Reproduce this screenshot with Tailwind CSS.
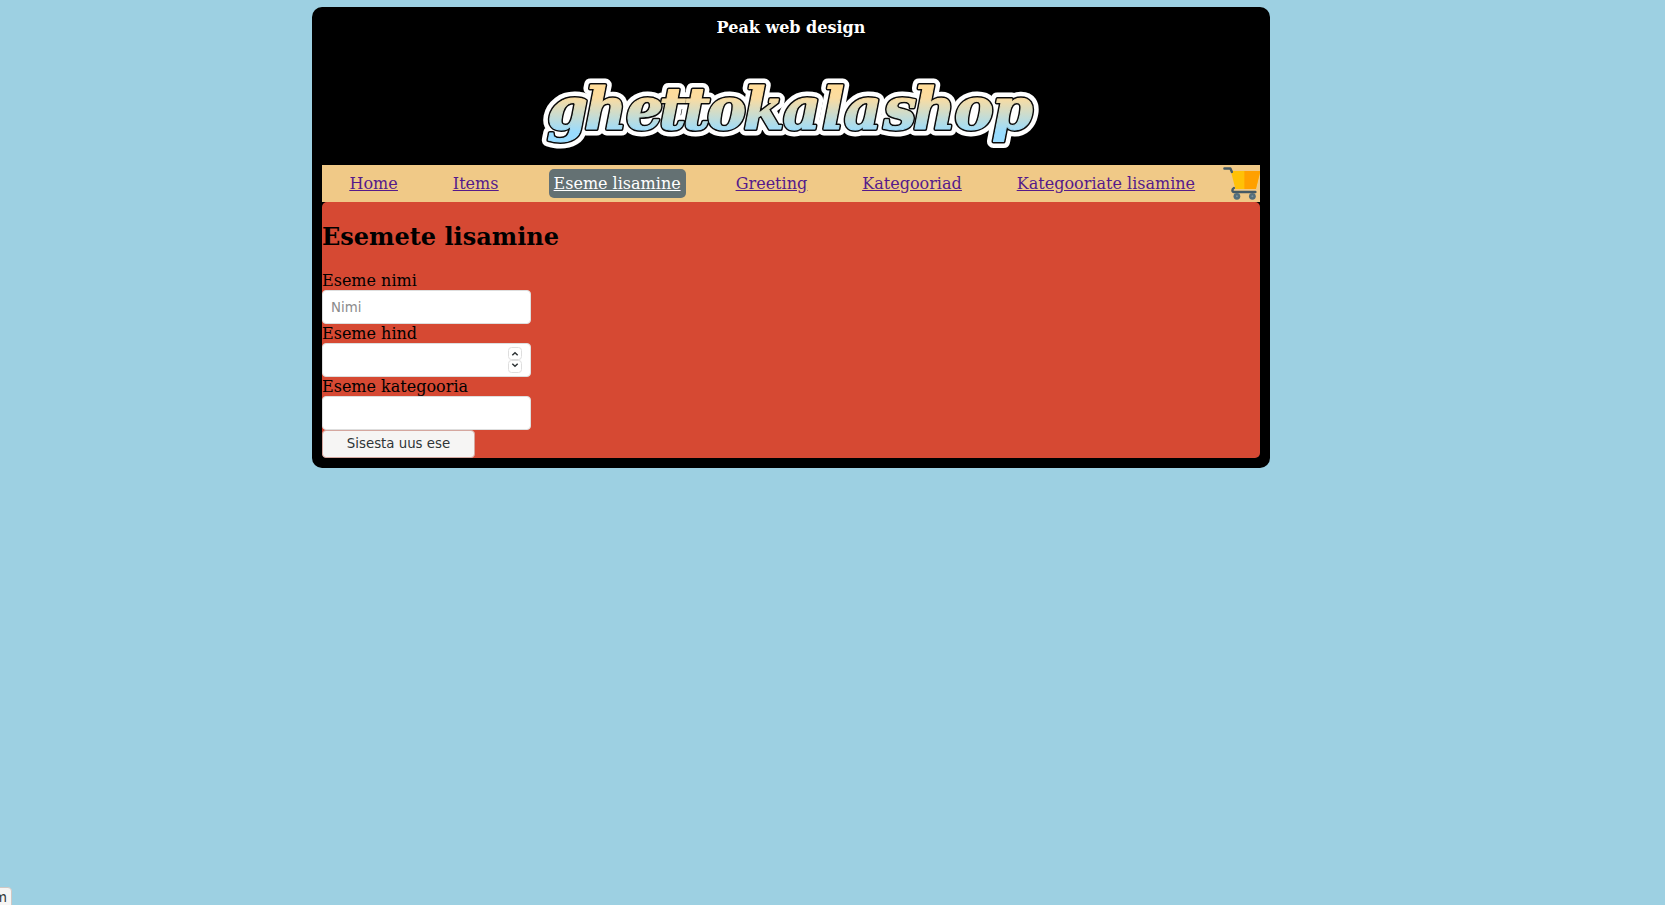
<!DOCTYPE html>
<html lang="et">
<head>
<meta charset="utf-8">
<title>Ghettokalashop</title>
<script src="https://cdn.jsdelivr.net/npm/@tailwindcss/browser@4"></script>
</head>
<body class="h-screen overflow-hidden bg-[#9dd0e2] pt-[7px] font-['DejaVu_Serif',serif] text-base leading-[19px] text-black">
<div class="ml-[312px] w-[958px] rounded-[10px] bg-black p-[10px]">
  <header class="h-[148px] pt-px">
    <p class="text-center font-bold text-white">Peak web design</p>
    <svg class="mt-[28px] ml-[208px] h-[90px] w-[522px]" viewBox="530 65 522 90">
      <defs>
        <linearGradient id="sky" gradientUnits="userSpaceOnUse" x1="0" y1="88" x2="0" y2="137">
          <stop offset="0" stop-color="#ffdc99"/><stop offset=".2" stop-color="#fbdca0"/><stop offset=".9" stop-color="#99dcff"/>
        </linearGradient>
      </defs>
      <g font-family="DejaVu Serif, serif" font-weight="bold" font-style="italic" font-size="58.5" stroke-linejoin="round">
        <text y="129" x="547 584.5 626 659 683 707 743.5 783 822 844 883.5 913 954.5 992" fill="#fff" stroke="#fff" stroke-width="13">ghettokalashop</text>
        <text y="129" x="547 584.5 626 659 683 707 743.5 783 822 844 883.5 913 954.5 992" fill="#0b0b0b" stroke="#0b0b0b" stroke-width="4" aria-hidden="true">ghettokalashop</text>
        <text y="129" x="547 584.5 626 659 683 707 743.5 783 822 844 883.5 913 954.5 992" fill="url(#sky)" stroke="url(#sky)" stroke-width="1" aria-hidden="true">ghettokalashop</text>
      </g>
    </svg>
  </header>
  <nav class="flex h-[37px] items-center bg-[#f0c987]">
    <div class="flex flex-1 items-center justify-around text-[#551a8b] underline">
      <a>Home</a>
      <a>Items</a>
      <a class="-mx-[5px] rounded-[5px] bg-[#647173] p-[5px] text-white">Eseme lisamine</a>
      <a>Greeting</a>
      <a>Kategooriad</a>
      <a>Kategooriate lisamine</a>
    </div>
    <svg class="h-[37px] w-[37.4px]" viewBox="0.6 0 37.4 37">
      <path d="M8.500 6H38l-4.500 18H13z" fill="#ffc107"/><path d="M22 6h16l-4.500 18H22z" fill="#ffa000"/>
      <path d="M2 3.500h6L9.500 7M11.500 23c-2 1-2 4 0 4H33" fill="none" stroke="#455a64" stroke-width="2.400" stroke-linecap="round" stroke-linejoin="round"/>
      <circle cx="14.500" cy="31.300" r="3.400" fill="#546e7a"/><circle cx="30" cy="31.300" r="3.400" fill="#546e7a"/>
      <circle cx="14.500" cy="31.300" r="1" fill="#78909c"/><circle cx="30" cy="31.300" r="1" fill="#78909c"/>
    </svg>
  </nav>
  <main class="flex h-[256.4px] flex-col items-start rounded-[5px] bg-[#d64933] pt-5">
    <h2 class="mb-[19px] text-2xl leading-[30px] font-bold">Esemete lisamine</h2>
    <label class="h-[19px]">Eseme nimi</label>
    <input placeholder="Nimi" class="h-[34px] w-[209px] rounded-[4px] border border-[#dedede] bg-white px-2 pt-px font-['DejaVu_Sans',sans-serif] text-[13.333px] placeholder:text-[#8b8b8b]">
    <label class="h-[19px]">Eseme hind</label>
    <div class="flex h-[34px] w-[209px] items-center justify-end rounded-[4px] border border-[#dedede] bg-white pr-2">
      <svg class="h-[26px] w-[14px]" viewBox="0 0 14 26" fill="none">
        <rect x=".5" y=".5" width="13" height="12" rx="3" stroke="#dedede"/><rect x=".5" y="13.5" width="13" height="12" rx="3" stroke="#dedede"/>
        <path d="M4.3 8.3 7 5.8l2.7 2.5M4.3 16.8 7 19.3l2.7-2.5" stroke="#2e3436" stroke-width="1.5"/>
      </svg>
    </div>
    <label class="h-[19px]">Eseme kategooria</label>
    <input class="h-[34px] w-[209px] rounded-[4px] border border-[#dedede] bg-white px-2">
    <button class="h-[29px] w-[153px] rounded-[4px] border border-[#d5a79f] bg-[#f6f5f4] pb-px font-['DejaVu_Sans',sans-serif] text-[13.333px] text-[#2e3436]">Sisesta uus ese</button>
  </main>
</div>
<div class="fixed top-[887px] -left-[150px] flex h-[29px] w-[162px] justify-end rounded-[4px] border border-[#d0c8c4] bg-[#f6f5f4] pr-[4px] font-['DejaVu_Sans',sans-serif] text-[13.333px] leading-[20px] text-[#2e3436]">m</div>
</body>
</html>
